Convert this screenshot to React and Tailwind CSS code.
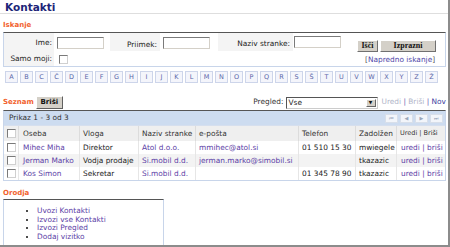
import React from 'react';

const letters = ['A','B','C','Č','D','E','F','G','H','I','J','K','L','M','N','O','P','Q','R','S','Š','T','U','V','W','X','Y','Z','Ž'];

const rows = [
  { name: 'Mihec Miha', role: 'Direktor', company: 'Atol d.o.o.', email: 'mmihec@atol.si', phone: '01 510 15 30', owner: 'mwiegele' },
  { name: 'Jerman Marko', role: 'Vodja prodaje', company: 'Si.mobil d.d.', email: 'jerman.marko@simobil.si', phone: '', owner: 'tkazazic' },
  { name: 'Kos Simon', role: 'Sekretar', company: 'Si.mobil d.d.', email: '', phone: '01 345 78 90', owner: 'tkazazic' },
];

const cols = 'grid grid-cols-[15px_61px_59px_57px_103px_57px_41px_48px]';

function Check() {
  return <span className="block w-[9px] h-[9px] border border-[#7a7a7a] border-r-[#d0d0d0] border-b-[#d0d0d0] bg-white" />;
}

function TextInput() {
  return <span className="block w-[47px] h-[12px] border border-[#7a7a7a] border-r-[#d4d0c8] border-b-[#d4d0c8] bg-white" />;
}

function NavBtn({ children }) {
  return (
    <span className="w-[13px] h-[9px] border border-[#d8dfea] bg-[#f2f5fa] text-[5px] leading-[7px] text-[#9aa6bb] flex items-center justify-center">
      {children}
    </span>
  );
}

export default function App() {
  return (
    <div className="w-[450px] h-[247px] bg-white overflow-hidden border-r-2 border-b-2 border-[#8c8c8c] font-['DejaVu_Sans',sans-serif] text-[7.4px] text-[#222]">
      {/* Title */}
      <div className="h-[14px] border-b border-[#dedede] pl-[5px] pt-[1px] text-[10.5px] leading-[12px] font-bold text-[#1c2578]">
        Kontakti
      </div>

      <div className="pl-[3px] pr-[2px]">
        {/* Iskanje */}
        <div className="h-[18px] flex items-end pb-[2px] text-[7px] font-bold text-[#f2622e]">Iskanje</div>
        <div className="border-t border-[#555] border-x border-x-[#c8d5ea] border-b border-b-[#c8d5ea] h-[35px] flex">
          <div className="w-[50px] bg-[#f4f4f4] flex flex-col">
            <div className="h-[18px] flex items-center justify-end pr-[2px] pt-[2px]">Ime:</div>
            <div className="h-[15px] flex items-center justify-end pr-[2px] pt-[1px]">Samo moji:</div>
          </div>
          <div className="w-[56px] flex flex-col pl-[3px]">
            <div className="h-[18px] flex items-center pt-[2px]"><TextInput /></div>
            <div className="h-[15px] flex items-center pl-[2px] pt-[1px]"><Check /></div>
          </div>
          <div className="w-[50px] bg-[#f4f4f4] flex items-start justify-end pr-[3px] pt-[6px] h-[18px]">Priimek:</div>
          <div className="w-[58px] pl-[3px] pt-[4px]"><TextInput /></div>
          <div className="w-[75px] bg-[#f4f4f4] flex items-start justify-end pr-[3px] pt-[5px] h-[18px]">Naziv stranke:</div>
          <div className="w-[62px] pl-[1px] pt-[3px]"><TextInput /></div>
          <div className="flex-1 flex flex-col items-start pl-[2px] pt-[7px]">
            <div className="flex gap-[2px]">
              <span className="h-[12px] w-[21px] bg-[#d4d0c8] border border-[#fff] border-r-[#707070] border-b-[#707070] font-['Liberation_Serif',serif] font-bold text-[8px] leading-[10px] text-center text-[#111]">Išči</span>
              <span className="h-[12px] w-[56px] bg-[#d4d0c8] border border-[#fff] border-r-[#707070] border-b-[#707070] font-['Liberation_Serif',serif] font-bold text-[8px] leading-[10px] text-center text-[#111]">Izprazni</span>
            </div>
            <div className="mt-[4px] ml-[8px] text-[#555] leading-[8px]">[<span className="text-[#4e46a8]">Napredno iskanje</span>]</div>
          </div>
        </div>

        {/* Letters */}
        <div className="flex gap-[2px] mt-[4px] pl-[2px] h-[13px]">
          {letters.map(l => (
            <span key={l} className="w-[13px] h-[12px] border border-[#cdd5ea] bg-[#f4f5fb] text-[#5a66a8] text-[6.5px] leading-[10px] text-center">
              {l}
            </span>
          ))}
        </div>

        {/* Seznam row */}
        <div className="h-[15px] mt-[11px] flex items-end">
          <span className="font-bold text-[7px] text-[#f2622e] pb-[3px]">Seznam</span>
          <span className="ml-[2px] mb-[1px] h-[13px] w-[27px] bg-[#d4d0c8] border border-[#fff] border-r-[#606060] border-b-[#606060] font-bold text-[7px] leading-[11px] text-center text-[#111]">Briši</span>
          <span className="ml-auto pb-[3px] mr-[2px] text-[#333]">Pregled:</span>
          <span className="mb-[1px] h-[12px] w-[92px] border border-[#555] border-r-[#ccc] border-b-[#ccc] bg-white flex items-center justify-between pl-[2px] pr-[1px]">
            <span>Vse</span>
            <span className="w-[10px] h-[8px] bg-[#d4d0c8] border border-[#fff] border-r-[#666] border-b-[#666] text-[4.5px] leading-[6px] text-center text-[#111]">▼</span>
          </span>
          <span className="pb-[3px] ml-[4px] text-[#b0b4c8] whitespace-nowrap">
            Uredi <span className="text-[#6a5ab0]">|</span> Briši <span className="text-[#6a5ab0]">|</span> <span className="text-[#3c3ca0]">Nov</span>
          </span>
        </div>

        {/* Table */}
        <div className="border-t border-[#555] border-x border-x-[#c8d5ea] border-b border-b-[#c8d5ea]">
          <div className="h-[14px] bg-[#cddcf0] flex items-center pl-[5px] pr-[2px] text-[#333]">
            <span>Prikaz 1 - 3 od 3</span>
            <span className="ml-auto flex gap-[2px]">
              <NavBtn>⏮</NavBtn>
              <NavBtn>◀</NavBtn>
              <NavBtn>▶</NavBtn>
              <NavBtn>⏭</NavBtn>
            </span>
          </div>
          <div className={`${cols} h-[16px] bg-[#efefef] border-t border-[#d6dfee] text-[#333]`}>
            <div className="flex items-center justify-center border-r border-[#dcdcdc]"><Check /></div>
            <div className="flex items-center pl-[4px] border-r border-[#dcdcdc]">Oseba</div>
            <div className="flex items-center pl-[3px] border-r border-[#dcdcdc]">Vloga</div>
            <div className="flex items-center pl-[3px] border-r border-[#dcdcdc]">Naziv stranke</div>
            <div className="flex items-center pl-[3px] border-r border-[#dcdcdc]">e-pošta</div>
            <div className="flex items-center pl-[3px] border-r border-[#dcdcdc]">Telefon</div>
            <div className="flex items-center pl-[3px] border-r border-[#dcdcdc]">Zadolžen</div>
            <div className="flex items-center pl-[3px] text-[6.5px]">Uredi | Briši</div>
          </div>
          {rows.map((r, i) => (
            <div key={r.name} className={`${cols} h-[13px] ${i === 1 ? 'bg-[#f3f3f3]' : 'bg-white'}`}>
              <div className="flex items-center justify-center border-r border-[#e6e6e6]"><Check /></div>
              <div className="flex items-center pl-[4px] border-r border-[#e6e6e6] text-[#5b3ea6] whitespace-nowrap">{r.name}</div>
              <div className="flex items-center pl-[3px] border-r border-[#e6e6e6] whitespace-nowrap">{r.role}</div>
              <div className="flex items-center pl-[3px] border-r border-[#e6e6e6] text-[#5b3ea6] whitespace-nowrap">{r.company}</div>
              <div className="flex items-center pl-[3px] border-r border-[#e6e6e6] text-[#5b3ea6] whitespace-nowrap">{r.email}</div>
              <div className="flex items-center pl-[3px] border-r border-[#e6e6e6] whitespace-nowrap">{r.phone}</div>
              <div className="flex items-center pl-[3px] border-r border-[#e6e6e6] whitespace-nowrap">{r.owner}</div>
              <div className="flex items-center pl-[4px] text-[#5b3ea6] whitespace-nowrap">uredi | briši</div>
            </div>
          ))}
        </div>

        {/* Orodja */}
        <div className="h-[18px] flex items-end pb-[1px] text-[7px] font-bold text-[#f2622e]">Orodja</div>
        <div className="w-[161px] h-[50px] border-t border-[#555] border-x border-x-[#c8d5ea]">
          <ul className="list-disc pl-[33px] pt-[7px] text-[#5b3ea6] leading-[8.7px] marker:text-[#111]">
            <li>Uvozi Kontakti</li>
            <li>Izvozi vse Kontakti</li>
            <li>Izvozi Pregled</li>
            <li>Dodaj vizitko</li>
          </ul>
        </div>
      </div>
    </div>
  );
}
